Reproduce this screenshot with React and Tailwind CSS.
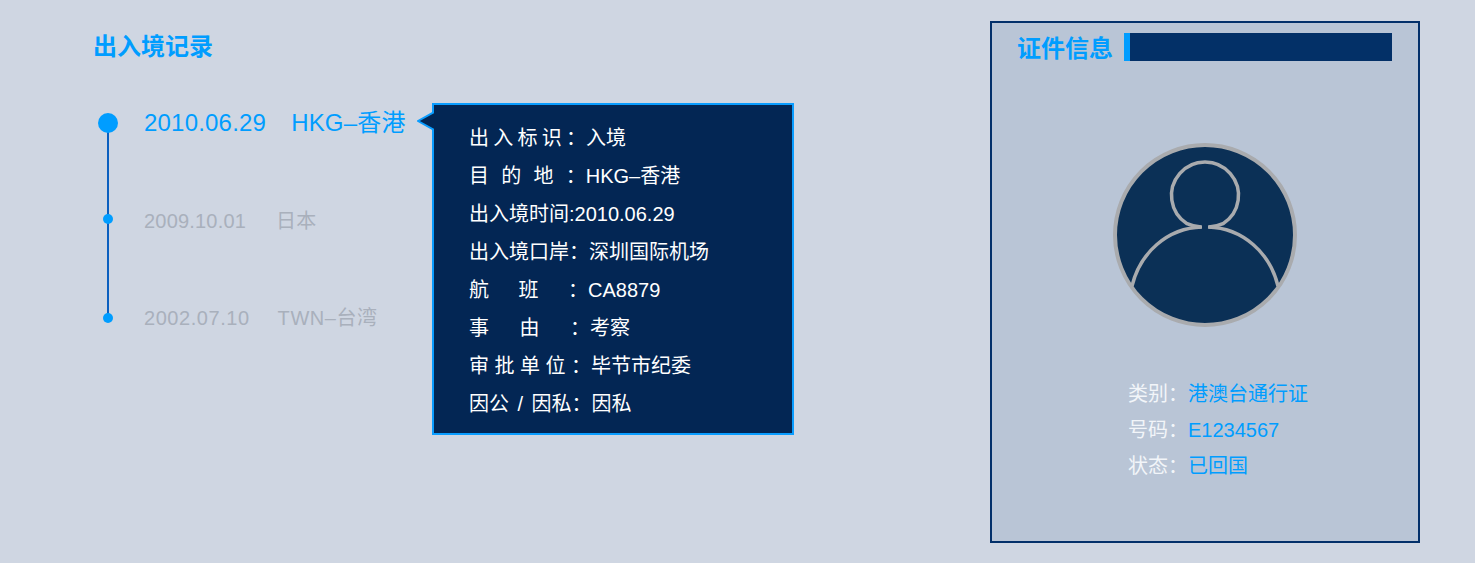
const font = `font-['Liberation_Sans','Noto_Sans_CJK_SC',sans-serif]`

const records = [
  { date: "2010.06.29", place: "HKG–香港", dot: "h-[20px] w-[20px]", text: "gap-[25px] text-[24px] tracking-[0.2px] text-[#009dff]" },
  { date: "2009.10.01", place: "日本", dot: "mt-[-4px] h-[10px] w-[10px]", text: "gap-[30px] text-[20px] tracking-[0.2px] text-[#a9b0bc]" },
  { date: "2002.07.10", place: "TWN–台湾", dot: "h-[10px] w-[10px]", text: "gap-[28px] text-[20px] tracking-[0.55px] text-[#a9b0bc]" },
]

const details = [
  { label: ["出", "入", "标", "识", "："], gap: "gap-x-[4.25px]", value: "入境" },
  { label: ["目", "的", "地", "："], gap: "gap-x-[12.25px]", value: "HKG–香港" },
  { label: ["出入境时间:"], gap: "", value: "2010.06.29" },
  { label: ["出入境口岸："], gap: "", value: "深圳国际机场" },
  { label: ["航", "班", "："], gap: "gap-x-[29.5px]", value: "CA8879" },
  { label: ["事", "由", "："], gap: "gap-x-[30.5px]", value: "考察" },
  { label: ["审", "批", "单", "位", "："], gap: "gap-x-[5.5px]", value: "毕节市纪委" },
  { label: ["因公", "/", "因私："], gap: "gap-x-[8.5px]", value: "因私" },
]

const cardInfo = [
  { label: "类别：", value: "港澳台通行证" },
  { label: "号码：", value: "E1234567" },
  { label: "状态：", value: "已回国" },
]

function Timeline() {
  return (
    <div className="relative mt-[38px] w-[310px]">
      <div className="absolute left-[13px] top-[21px] h-[195px] w-[2px] bg-[#0b5fbf]" />
      {records.map(r => (
        <div key={r.date} className="relative flex h-[97.5px] items-start">
          <div className="flex h-[40px] w-[28px] shrink-0 items-center justify-center">
            <span className={`rounded-full bg-[#009dff] ${r.dot}`} />
          </div>
          <div className={`ml-[22px] flex h-[40px] items-center whitespace-nowrap ${r.text}`}>
            <span>{r.date}</span>
            <span>{r.place}</span>
          </div>
        </div>
      ))}
    </div>
  )
}

function Tooltip() {
  return (
    <div className="absolute left-[432px] top-[103px] h-[332px] w-[362px] border-2 border-[#0a9dff] bg-[#032654] pl-[35px] pt-[14px] text-[20px] text-white">
      <svg className="absolute left-[-17px] top-[6px]" width="17" height="20" viewBox="0 0 17 20">
        <path d="M17 1 L1 10 L17 19 Z" fill="#032654" />
        <path d="M17 1 L1 10 L17 19" fill="none" stroke="#0a9dff" strokeWidth="2" />
      </svg>
      {details.map((d, i) => (
        <div key={i} className="flex h-[38px] items-center whitespace-nowrap">
          <span className={`flex ${d.gap}`}>
            {d.label.map((c, j) => <span key={j}>{c}</span>)}
          </span>
          <span>{d.value}</span>
        </div>
      ))}
    </div>
  )
}

function Avatar() {
  return (
    <svg width="184" height="184" viewBox="0 0 184 184">
      <circle cx="92" cy="92" r="90" fill="#0b3056" stroke="#a9abae" strokeWidth="4" />
      <path d="M88 84 Q80 83.5 74 80.7 A33.5 33.5 0 1 1 110 80.7 Q104 83.5 96 84" fill="none" stroke="#a9abae" strokeWidth="3.5" />
      <path d="M19 143 C27 110 54 85 89 84" fill="none" stroke="#a9abae" strokeWidth="3.5" />
      <path d="M165 143 C157 110 130 85 95 84" fill="none" stroke="#a9abae" strokeWidth="3.5" />
    </svg>
  )
}

function IdCard() {
  return (
    <div className="h-[522px] w-[430px] border-2 border-[#03306a] bg-[#b9c5d6]">
      <div className="mt-[10px] flex h-[28px] items-center pl-[25px]">
        <h2 className="pt-[3px] text-[24px] font-bold whitespace-nowrap text-[#009dff]">证件信息</h2>
        <div className="ml-[11px] h-[28px] w-[268px] border-l-[6px] border-[#009dff] bg-[#033067]" />
      </div>
      <div className="mt-[82px] flex justify-center">
        <Avatar />
      </div>
      <div className="mt-[49px] pl-[136px] text-[20px]">
        {cardInfo.map(row => (
          <div key={row.label} className="flex h-[36px] items-center whitespace-nowrap">
            <span className="text-[#f2f5f9]">{row.label}</span>
            <span className="text-[#009dff]">{row.value}</span>
          </div>
        ))}
      </div>
    </div>
  )
}

export default function App() {
  return (
    <div className={`relative flex h-[563px] w-full items-start justify-between bg-[#cfd6e2] pr-[55px] ${font}`}>
      <div className="pl-[94px] pt-[29px]">
        <h1 className="ml-[-1px] text-[24px] leading-[36px] font-bold text-[#009dff]">出入境记录</h1>
        <Timeline />
      </div>
      <Tooltip />
      <div className="pt-[21px]">
        <IdCard />
      </div>
    </div>
  )
}
